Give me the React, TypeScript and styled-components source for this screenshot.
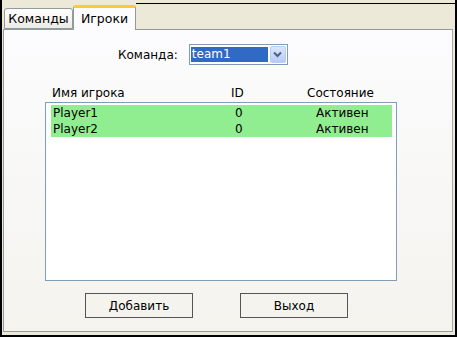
import { createGlobalStyle } from 'styled-components'
import styled from 'styled-components'

const GlobalStyle = createGlobalStyle`
  html, body {
    margin: 0;
    padding: 0;
    background: #ece9d8;
  }
  body {
    font-family: 'DejaVu Sans', 'Liberation Sans', sans-serif;
    font-size: 12px;
    color: #000;
  }
`

const StyledWindow = styled.div`
  box-sizing: border-box;
  width: 457px;
  height: 337px;
  background: #ece9d8;
  border-left: 2px solid #000;
  border-right: 2px solid #000;
  border-bottom: 2px solid #000;
  display: flex;
  flex-direction: column;
  padding: 4px 2px 3px 1px;
`

const StyledTabStrip = styled.div`
  display: flex;
  align-items: flex-end;
  height: 25px;
  padding-left: 1px;
  position: relative;
  z-index: 1;
`

const StyledTab = styled.div<{ $active?: boolean }>`
  box-sizing: border-box;
  width: ${(p) => (p.$active ? '63px' : '69px')};
  height: ${(p) => (p.$active ? '25px' : '21px')};
  margin-bottom: ${(p) => (p.$active ? '-1px' : '0')};
  padding-top: ${(p) => (p.$active ? '3px' : '2px')};
  text-align: center;
  border: 1px solid #919b9c;
  border-bottom: ${(p) => (p.$active ? 'none' : '1px solid #919b9c')};
  border-top: ${(p) => (p.$active ? '3px solid #ffc83c' : '1px solid #919b9c')};
  border-radius: 3px 3px 0 0;
  background: ${(p) =>
    p.$active ? '#fcfcfe' : 'linear-gradient(#ffffff, #ecebe6)'};
  font-size: 12.5px;
  line-height: 16px;
  white-space: nowrap;
`

const StyledStripFiller = styled.div`
  flex: 1;
  align-self: flex-start;
  margin-top: -1px;
  margin-right: -2px;
  border-top: 1px solid #000;
`

const StyledPanel = styled.div`
  flex: 1;
  box-sizing: border-box;
  border: 1px solid #919b9c;
  border-right-color: #a7a6aa;
  background: linear-gradient(#fcfcfe, #f4f3ee);
  display: flex;
  flex-direction: column;
  padding: 14px 0 0 41px;
`

const StyledComboRow = styled.div`
  display: flex;
  align-items: center;
  gap: 11px;
  padding-left: 73px;
`

const StyledLabel = styled.span`
  font-size: 12px;
`

const StyledCombo = styled.div`
  box-sizing: border-box;
  width: 99px;
  height: 21px;
  border: 1px solid #7f9db9;
  background: #fff;
  display: flex;
  align-items: center;
  padding: 1px;
  gap: 2px;
`

const StyledComboValue = styled.div`
  flex: 1;
  height: 15px;
  background: #316ac5;
  color: #fff;
  font-size: 12px;
  line-height: 15px;
  padding-left: 1px;
`

const StyledComboButton = styled.div`
  box-sizing: border-box;
  width: 16px;
  height: 17px;
  border: 1px solid #b9cdf6;
  border-radius: 2px;
  background: linear-gradient(#dbe6fd, #b6cbf8);
  display: flex;
  align-items: center;
  justify-content: center;
`

const StyledHeaderRow = styled.div`
  display: grid;
  grid-template-columns: 179px 76px auto;
  margin-top: 21px;
  padding-left: 7px;
  height: 15px;
  line-height: 15px;
  font-size: 12px;
`

const StyledList = styled.div`
  box-sizing: border-box;
  width: 352px;
  height: 179px;
  margin-top: 1px;
  border: 1px solid #7f9db9;
  background: #fff;
  padding: 2px 4px 0 5px;
`

const StyledListRow = styled.div`
  display: grid;
  grid-template-columns: 182px 81px auto;
  height: 16px;
  line-height: 16px;
  padding-left: 2px;
  background: #90ee90;
  font-size: 12px;
`

const StyledButtonRow = styled.div`
  display: flex;
  gap: 47px;
  margin-top: 12px;
  padding-left: 40px;
`

const StyledButton = styled.button`
  box-sizing: border-box;
  width: 108px;
  height: 25px;
  border: 1px solid #555555;
  background: #f4f3ee;
  font-family: inherit;
  font-size: 12px;
  color: #000;
  padding: 0;
`

type Player = {
  name: string
  id: number
  state: string
}

const players: Player[] = [
  { name: 'Player1', id: 0, state: 'Активен' },
  { name: 'Player2', id: 0, state: 'Активен' },
]

const ChevronDown = () => (
  <svg width="9" height="7" viewBox="0 0 9 7">
    <path d="M1 1.5 L4.5 5 L8 1.5" fill="none" stroke="#4d6185" strokeWidth="2" />
  </svg>
)

export default function App() {
  return (
    <>
      <GlobalStyle />
      <StyledWindow>
        <StyledTabStrip>
          <StyledTab>Команды</StyledTab>
          <StyledTab $active>Игроки</StyledTab>
          <StyledStripFiller />
        </StyledTabStrip>
        <StyledPanel>
          <StyledComboRow>
            <StyledLabel>Команда:</StyledLabel>
            <StyledCombo>
              <StyledComboValue>team1</StyledComboValue>
              <StyledComboButton>
                <ChevronDown />
              </StyledComboButton>
            </StyledCombo>
          </StyledComboRow>
          <StyledHeaderRow>
            <span>Имя игрока</span>
            <span>ID</span>
            <span>Состояние</span>
          </StyledHeaderRow>
          <StyledList>
            {players.map((p) => (
              <StyledListRow key={p.name}>
                <span>{p.name}</span>
                <span>{p.id}</span>
                <span>{p.state}</span>
              </StyledListRow>
            ))}
          </StyledList>
          <StyledButtonRow>
            <StyledButton>Добавить</StyledButton>
            <StyledButton>Выход</StyledButton>
          </StyledButtonRow>
        </StyledPanel>
      </StyledWindow>
    </>
  )
}
